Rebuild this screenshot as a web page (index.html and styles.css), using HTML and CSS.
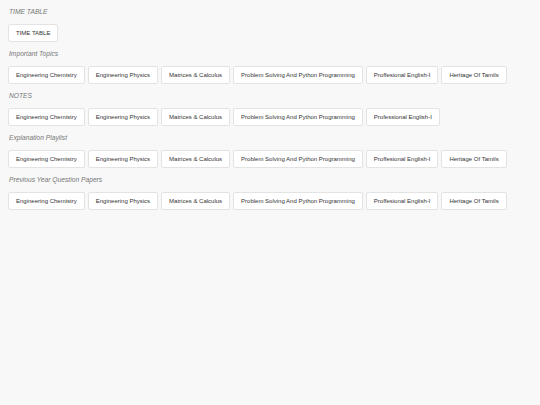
FILE: index.html
```html
<!DOCTYPE html>
<html>
<head>
<meta charset="utf-8">
<link rel="stylesheet" href="styles.css">
</head>
<body>
<section class="group">
  <h2 class="title">TIME TABLE</h2>
  <div class="row">
    <a class="btn">TIME TABLE</a>
  </div>
</section>
<section class="group">
  <h2 class="title">Important Topics</h2>
  <div class="row">
    <a class="btn">Engineering Chemistry</a>
    <a class="btn">Engineering Physics</a>
    <a class="btn">Matrices &amp; Calculus</a>
    <a class="btn">Problem Solving And Python Programming</a>
    <a class="btn">Proffesional English-I</a>
    <a class="btn">Heritage Of Tamils</a>
  </div>
</section>
<section class="group">
  <h2 class="title">NOTES</h2>
  <div class="row">
    <a class="btn">Engineering Chemistry</a>
    <a class="btn">Engineering Physics</a>
    <a class="btn">Matrices &amp; Calculus</a>
    <a class="btn">Problem Solving And Python Programming</a>
    <a class="btn">Professional English-I</a>
  </div>
</section>
<section class="group">
  <h2 class="title">Explanation Playlist</h2>
  <div class="row">
    <a class="btn">Engineering Chemistry</a>
    <a class="btn">Engineering Physics</a>
    <a class="btn">Matrices &amp; Calculus</a>
    <a class="btn">Problem Solving And Python Programming</a>
    <a class="btn">Proffesional English-I</a>
    <a class="btn">Heritage Of Tamils</a>
  </div>
</section>
<section class="group">
  <h2 class="title">Previous Year Question Papers</h2>
  <div class="row">
    <a class="btn">Engineering Chemistry</a>
    <a class="btn">Engineering Physics</a>
    <a class="btn">Matrices &amp; Calculus</a>
    <a class="btn">Problem Solving And Python Programming</a>
    <a class="btn">Proffesional English-I</a>
    <a class="btn">Heritage Of Tamils</a>
  </div>
</section>
</body>
</html>
```

FILE: styles.css
```css
html, body {
  background: #f8f8f8;
}
body {
  margin: 8px;
  font-family: "Liberation Sans", Arial, sans-serif;
  color: #333;
}
.group {
  margin: 0 0 8px 0;
}
.title {
  margin: 0 0 8px 1px;
  font-size: 6.7px;
  line-height: 8px;
  font-weight: normal;
  font-style: italic;
  color: #777;
}
.row {
  display: flex;
  flex-wrap: wrap;
  gap: 3px;
}
.btn {
  box-sizing: border-box;
  height: 18px;
  display: flex;
  align-items: center;
  padding: 0 7px;
  background: #fff;
  border: 1px solid #e3e3e3;
  border-radius: 2px;
  font-size: 6px;
  color: #333;
  text-decoration: none;
  white-space: nowrap;
}
```
